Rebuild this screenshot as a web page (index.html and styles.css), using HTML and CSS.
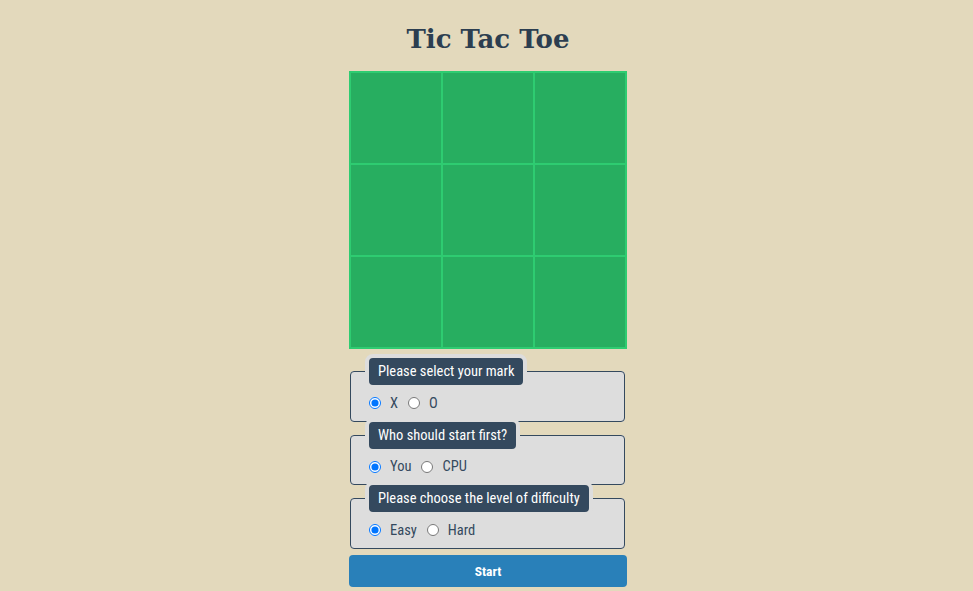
FILE: index.html
```html
<!DOCTYPE html>
<html lang="en">
<head>
<meta charset="utf-8">
<title>Tic Tac Toe</title>
<link rel="stylesheet" href="styles.css">
</head>
<body>
<main class="app">
  <h1 class="title">Tic Tac Toe</h1>
  <div class="board">
    <div class="cell"></div><div class="cell"></div><div class="cell"></div>
    <div class="cell"></div><div class="cell"></div><div class="cell"></div>
    <div class="cell"></div><div class="cell"></div><div class="cell"></div>
  </div>
  <form class="options">
    <fieldset class="group">
      <legend class="group-title">Please select your mark</legend>
      <label class="opt"><input type="radio" name="mark" checked><span>X</span></label>
      <label class="opt"><input type="radio" name="mark"><span>O</span></label>
    </fieldset>
    <fieldset class="group">
      <legend class="group-title">Who should start first?</legend>
      <label class="opt"><input type="radio" name="first" checked><span>You</span></label>
      <label class="opt"><input type="radio" name="first"><span>CPU</span></label>
    </fieldset>
    <fieldset class="group">
      <legend class="group-title">Please choose the level of difficulty</legend>
      <label class="opt"><input type="radio" name="level" checked><span>Easy</span></label>
      <label class="opt"><input type="radio" name="level"><span>Hard</span></label>
    </fieldset>
    <button type="button" class="start">Start</button>
  </form>
</main>
</body>
</html>
```
FILE: styles.css
```css
html, body {
  margin: 0;
  padding: 0;
}
body {
  background: #e3d9bc;
  font-family: "Roboto Condensed", "Liberation Sans Narrow", "DejaVu Sans Condensed", Roboto, sans-serif;
  color: #34495e;
}
.app {
  width: 278px;
  margin-left: calc(50% - 137.5px);
  padding-top: 20px;
}
.title {
  margin: 0 0 13px;
  height: 38px;
  line-height: 38px;
  text-align: center;
  font-family: "Roboto Slab", "DejaVu Serif", serif;
  font-weight: bold;
  font-size: 26px;
  color: #2c3e50;
}
.board {
  display: grid;
  grid-template-columns: repeat(3, 90px);
  grid-template-rows: repeat(3, 90px);
  gap: 2px;
  padding: 2px;
  background: #2ecc71;
}
.cell {
  background: #27ae60;
}
.options {
  margin: 0;
  padding-top: 5px;
}
.group {
  position: relative;
  margin: 0 2px -4px 1px;
  padding: 4px 14px 7.5px;
  border: 1px solid #34495e;
  border-radius: 4px;
  background: #dddddd;
  display: flex;
  align-items: center;
  font-size: 14.5px;
}
.group-title {
  padding: 5px 9px;
  border: 4px solid #dddddd;
  border-radius: 8px;
  background: #34495e;
  color: #ffffff;
  font-size: 14.5px;
  line-height: 17px;
}
.opt {
  display: inline-flex;
  align-items: center;
  height: 20px;
  color: #34495e;
  margin-right: 6px;
}
.opt input {
  margin: 0 9px 0 4px;
  width: 12px;
  height: 12px;
}
.start {
  display: block;
  width: 278px;
  height: 32px;
  margin: 10px 0 0;
  border: none;
  border-radius: 4px;
  background: #2980b9;
  color: #ffffff;
  font-family: inherit;
  font-weight: bold;
  font-size: 13.5px;
}
```
